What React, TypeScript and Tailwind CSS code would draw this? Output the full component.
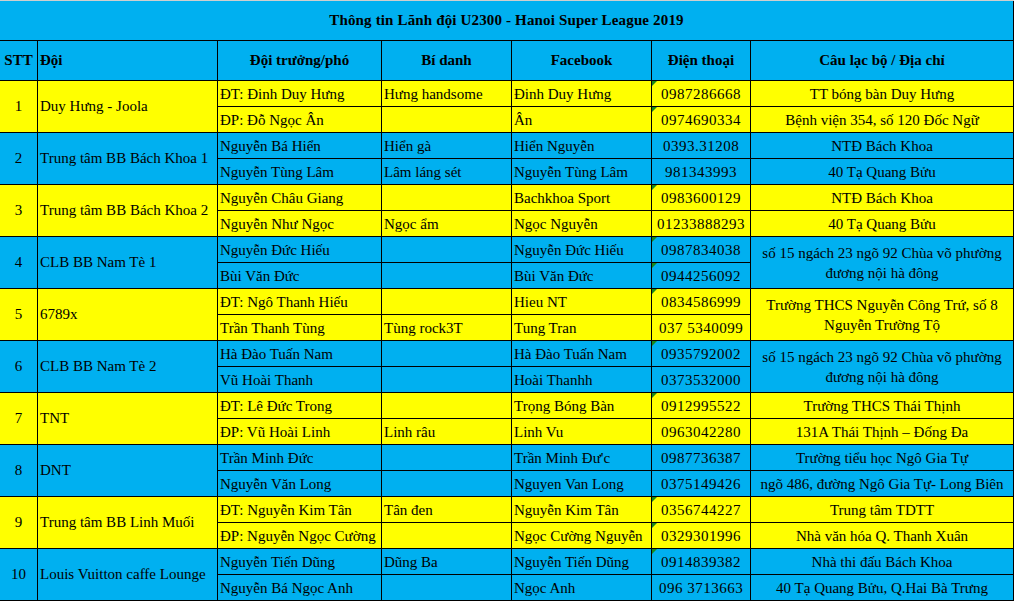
import React from "react";

type Sub = { name: string; alias: string; fb: string; phone: string; club?: string; tri?: boolean };
type Team = { stt: string; team: string; a: Sub; b: Sub; mergedClub?: string[] };

const teams: Team[] = [
  {
    stt: "1",
    team: "Duy Hưng - Joola",
    a: { name: "ĐT: Đinh Duy Hưng", alias: "Hưng handsome", fb: "Đinh Duy Hưng", phone: "0987286668", club: "TT bóng bàn Duy Hưng", tri: true },
    b: { name: "ĐP: Đỗ Ngọc Ân", alias: "", fb: "Ân", phone: "0974690334", club: "Bệnh viện 354, số 120 Đốc Ngữ", tri: true },
  },
  {
    stt: "2",
    team: "Trung tâm BB Bách Khoa 1",
    a: { name: "Nguyễn Bá Hiển", alias: "Hiển gà", fb: "Hiển Nguyễn", phone: "0393.31208", club: "NTĐ Bách Khoa" },
    b: { name: "Nguyễn Tùng Lâm", alias: "Lâm láng sét", fb: "Nguyễn Tùng Lâm", phone: "981343993", club: "40 Tạ Quang Bửu" },
  },
  {
    stt: "3",
    team: "Trung tâm BB Bách Khoa 2",
    a: { name: "Nguyễn Châu Giang", alias: "", fb: "Bachkhoa Sport", phone: "0983600129", club: "NTĐ Bách Khoa", tri: true },
    b: { name: "Nguyễn Như Ngọc", alias: "Ngọc ẩm", fb: "Ngọc Nguyễn", phone: "01233888293", club: "40 Tạ Quang Bửu" },
  },
  {
    stt: "4",
    team: "CLB BB Nam Tè 1",
    a: { name: "Nguyễn Đức Hiếu", alias: "", fb: "Nguyễn Đức Hiếu", phone: "0987834038", tri: true },
    b: { name: "Bùi Văn Đức", alias: "", fb: "Bùi Văn Đức", phone: "0944256092", tri: true },
    mergedClub: ["số 15 ngách 23 ngõ 92 Chùa võ phường", "đương nội hà đông"],
  },
  {
    stt: "5",
    team: "6789x",
    a: { name: "ĐT: Ngô Thanh Hiếu", alias: "", fb: "Hieu NT", phone: "0834586999", tri: true },
    b: { name: "Trần Thanh Tùng", alias: "Tùng rock3T", fb: "Tung Tran", phone: "037 5340099" },
    mergedClub: ["Trường THCS Nguyễn Công Trứ, số 8", "Nguyễn Trường Tộ"],
  },
  {
    stt: "6",
    team: "CLB BB Nam Tè 2",
    a: { name: "Hà Đào Tuấn Nam", alias: "", fb: "Hà Đào Tuấn Nam", phone: "0935792002", tri: true },
    b: { name: "Vũ Hoài Thanh", alias: "", fb: "Hoài Thanhh", phone: "0373532000" },
    mergedClub: ["số 15 ngách 23 ngõ 92 Chùa võ phường", "đương nội hà đông"],
  },
  {
    stt: "7",
    team: "TNT",
    a: { name: "ĐT: Lê Đức Trong", alias: "", fb: "Trọng Bóng Bàn", phone: "0912995522", club: "Trường THCS Thái Thịnh", tri: true },
    b: { name: "ĐP: Vũ Hoài Linh", alias: "Linh râu", fb: "Linh Vu", phone: "0963042280", club: "131A Thái Thịnh – Đống Đa" },
  },
  {
    stt: "8",
    team: "DNT",
    a: { name: "Trần Minh Đức", alias: "", fb: "Trần Minh Đư'c", phone: "0987736387", club: "Trường tiểu học Ngô Gia Tự" },
    b: { name: "Nguyễn Văn Long", alias: "", fb: "Nguyen Van Long", phone: "0375149426", club: "ngõ 486, đường Ngô Gia Tự- Long Biên" },
  },
  {
    stt: "9",
    team: "Trung tâm BB Linh Muối",
    a: { name: "ĐT: Nguyễn Kim Tân", alias: "Tân đen", fb: "Nguyễn Kim Tân", phone: "0356744227", club: "Trung tâm TDTT", tri: true },
    b: { name: "ĐP: Nguyễn Ngọc Cường", alias: "", fb: "Ngọc Cường Nguyễn", phone: "0329301996", club: "Nhà văn hóa Q. Thanh Xuân", tri: true },
  },
  {
    stt: "10",
    team: "Louis Vuitton caffe Lounge",
    a: { name: "Nguyễn Tiến Dũng", alias: "Dũng Ba", fb: "Nguyễn Tiến Dũng", phone: "0914839382", club: "Nhà thi đấu Bách Khoa", tri: true },
    b: { name: "Nguyễn Bá Ngọc Anh", alias: "", fb: "Ngọc Anh", phone: "096 3713663", club: "40 Tạ Quang Bửu, Q.Hai Bà Trưng" },
  },
];

const base = "border-r border-b border-black overflow-hidden whitespace-nowrap";
const subL = "pl-[2px] pt-[2px] leading-[23px] text-left";
const subC = "pt-[2px] leading-[23px] text-center";
const merged = "row-span-2 flex items-center";

function Tri() {
  return (
    <svg className="absolute left-0 top-0" width="5" height="5" viewBox="0 0 5 5">
      <polygon points="0,0 5,0 0,5" fill="#1a8a1a" />
    </svg>
  );
}

function SubRow({ s, bg, withClub }: { s: Sub; bg: string; withClub: boolean }) {
  return (
    <>
      <div className={`${base} ${bg} ${subL}`}>{s.name}</div>
      <div className={`${base} ${bg} ${subL}`}>{s.alias}</div>
      <div className={`${base} ${bg} ${subL}`}>{s.fb}</div>
      <div className={`${base} ${bg} ${subC} relative tracking-[0.5px]`}>
        {s.tri && <Tri />}
        {s.phone}
      </div>
      {withClub && <div className={`${base} ${bg} ${subC}`}>{s.club}</div>}
    </>
  );
}

export default function App() {
  return (
    <div className="w-[1014px] h-[601px] overflow-hidden bg-white font-['Liberation_Serif',serif] text-[15px] text-black">
      <div className="h-px bg-[#cfcfcf]" />
      <div className="grid grid-cols-[38px_180px_164px_130px_140px_99px_263px] grid-rows-[40px_40px] auto-rows-[26px]">
        <div className={`${base} col-span-7 bg-[#00b0f0] flex items-center justify-center font-bold tracking-[0.15px]`}>
          Thông tin Lãnh đội U2300 - Hanoi Super League 2019
        </div>
        <div className={`${base} bg-[#00b0f0] flex items-center justify-center font-bold`}>STT</div>
        <div className={`${base} bg-[#00b0f0] flex items-center pl-[2px] font-bold`}>Đội</div>
        <div className={`${base} bg-[#00b0f0] flex items-center justify-center font-bold`}>Đội trưởng/phó</div>
        <div className={`${base} bg-[#00b0f0] flex items-center justify-center font-bold`}>Bí danh</div>
        <div className={`${base} bg-[#00b0f0] flex items-center justify-center font-bold`}>Facebook</div>
        <div className={`${base} bg-[#00b0f0] flex items-center justify-center font-bold`}>Điện thoại</div>
        <div className={`${base} bg-[#00b0f0] flex items-center justify-center font-bold`}>Câu lạc bộ / Địa chỉ</div>

        {teams.map((t, i) => {
          const bg = i % 2 === 0 ? "bg-[#ffff00]" : "bg-[#00b0f0]";
          return (
            <React.Fragment key={t.stt}>
              <div className={`${base} ${bg} ${merged} justify-center`}>{t.stt}</div>
              <div className={`${base} ${bg} ${merged} pl-[2px]`}>{t.team}</div>
              <SubRow s={t.a} bg={bg} withClub={!t.mergedClub} />
              {t.mergedClub && (
                <div className={`${base} ${bg} row-span-2 flex flex-col items-center justify-center leading-[20px] pt-[1px]`}>
                  {t.mergedClub.map((l) => (
                    <span key={l}>{l}</span>
                  ))}
                </div>
              )}
              <SubRow s={t.b} bg={bg} withClub={!t.mergedClub} />
            </React.Fragment>
          );
        })}
      </div>
    </div>
  );
}
